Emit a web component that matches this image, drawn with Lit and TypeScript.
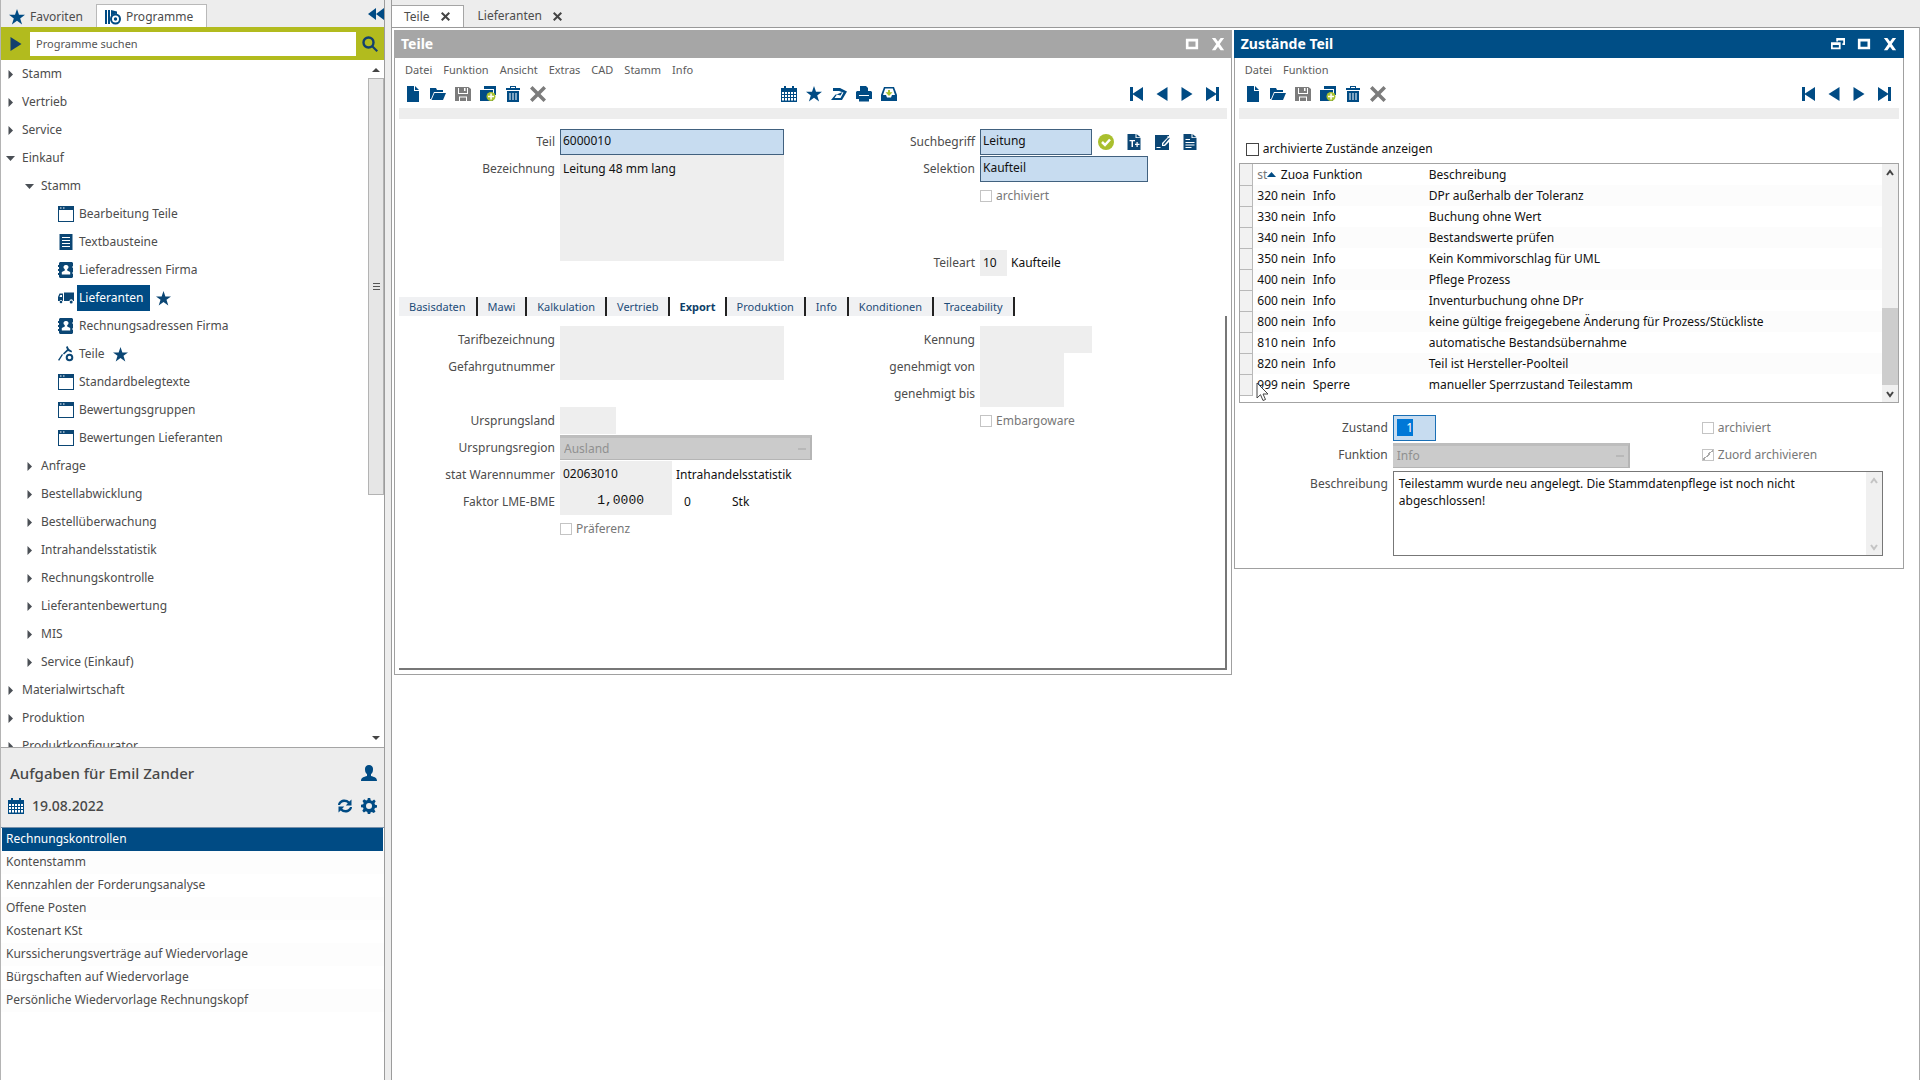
import { LitElement, html, css, svg, nothing } from "lit";
import { customElement, property, state } from "lit/decorators.js";
import { classMap } from "lit/directives/class-map.js";

const shapes: Record<string, unknown> = {
  star: svg`<path d="M8 0l2 5.800h6l-4.800 3.600 1.900 6L8 11.800 2.900 15.400l1.900-6L0 5.800h6z"/>`,
  programs: svg`<path d="M0 1h2v14H0zM3 1h2v14H3zM6 1l6 1.500V5A5.500 5.500 0 0 0 6 8z"/><circle cx="10.500" cy="10" r="4.500" fill="#fff" stroke="currentColor" stroke-width="2"/><circle cx="10.500" cy="10" r="1.700"/>`,
  window: svg`<path d="M0 0h16v16H0zM1 4v11h14V4z" fill-rule="evenodd"/><path fill="#fff" d="M2 1.500h1.500v1H2zM5 1.500h1.500v1H5z"/>`,
  lines: svg`<path d="M1.500 0h13v16h-13z"/><path fill="#fff" d="M4 3h8v1H4zM4 6h8v1H4zM4 9h8v1H4zM4 12h8v1H4z"/>`,
  book: svg`<path d="M2 0h12l1 1v3l-1 1 1 1v4l-1 1 1 1v3l-1 1H2l-1-1v-2H0v-2h1v-2H0V7h1V5H0V3h1V1z"/><path fill="#fff" d="M8 3a2.200 2.200 0 0 1 1.200 4.200V8.500l3 1.500v2.500H3.800V10l3-1.500V7.200A2.200 2.200 0 0 1 8 3z"/>`,
  truck: svg`<path d="M6 2.500H16V11h-1a1.800 1.800 0 0 0-3.600 0H6zM0 7l1.500-3.500H5V11h-.5a1.500 1.500 0 0 0-2.900 0H0z"/><path fill="#fff" d="M1.500 7l.8-2H4v2z"/><circle cx="13.200" cy="12" r="1.500"/><circle cx="3" cy="12" r="1.300"/>`,
  parts: svg`<path d="M0 14L4 8l1 .8-3.800 6zM8 1l1.500-1L11 3l3 2-.5 1.500L10 5 6 8.500 5 7.500l4-4z"/><circle cx="11.500" cy="11.500" r="2.800" fill="none" stroke="currentColor" stroke-width="2"/>`,
  file: svg`<path d="M2 0h7v5h5v11H2zM10 0l4 4h-4z"/>`,
  folder: svg`<path d="M0 2h6l1 2h6v2H4L1 13H0z"/><path d="M4.500 7H16l-3 7H1.500z"/>`,
  save: svg`<path d="M1 1h12.500L16 3v12H0V1z"/><path fill="#fff" d="M3 2h1v5h8V2h1v6H3zM4 10.500h8V15h-1v-3.500H5V15H4z"/><path fill="#fff" d="M9 2h1.500v3H9z"/>`,
  copy: svg`<path d="M4 0h12v9h-2V3H4z"/><path d="M0 4h13v11H0z"/><circle cx="11" cy="10.500" r="4.500" fill="#a9c22f"/><path fill="#fff" d="M10.300 7.500h1.500v2.200H14v1.500h-2.200v2.300h-1.500v-2.300H8V9.700h2.300z"/>`,
  trash: svg`<path d="M5 0h6v2h4v2H1V2h4zM6 1v1h4V1z" fill-rule="evenodd"/><path d="M2 5h12v11H2z"/><path fill="#fff" d="M4.500 7h1v7h-1zM7.500 7h1v7h-1zM10.500 7h1v7h-1z"/>`,
  cross: svg`<path d="M2.500 0L8 5.500 13.500 0 16 2.500 10.500 8 16 13.500 13.500 16 8 10.500 2.500 16 0 13.500 5.500 8 0 2.500z"/>`,
  calendar: svg`<path d="M0 2h3V0h2v2h6V0h2v2h3v14H0z"/><path fill="#fff" d="M1 6h2v2H1zM4 6h2v2H4zM7 6h2v2H7zM10 6h2v2h-2zM13 6h2v2h-2zM1 9h2v2H1zM4 9h2v2H4zM7 9h2v2H7zM10 9h2v2h-2zM13 9h2v2h-2zM1 12h2v2.500H1zM4 12h2v2.500H4zM7 12h2v2.500H7zM10 12h2v2.500h-2zM13 12h2v2.500h-2z"/>`,
  send: svg`<path d="M2 2h7l7 3.500L11 14H0l4.500-5.500H6L3.500 12H9.500l3-5.500L8 5H2z"/><path d="M5.500 8.500l6-2.500-2 3.500z"/>`,
  print: svg`<path d="M4 0h6l2 2v3H4zM1 5h14l1 1v7h-3v2.500H3V13H0V6z"/><path fill="#fff" d="M3 9h10v1H3z"/>`,
  inbox: svg`<path d="M3 1h10l3 8v6H0V9z"/><path fill="#fff" d="M4.200 2.500h7.600L14 9h-3l-1 2.500H6L5 9H2z"/><path fill="#a9c22f" d="M7 4h2v2.200h2.500L8 10 4.500 6.200H7z"/>`,
  first: svg`<path d="M1 1h3v6.500L14 1v14L4 8.500V15H1z"/>`,
  prev: svg`<path d="M2.500 8L13.500 1v14z"/>`,
  next: svg`<path d="M13.500 8L2.500 1v14z"/>`,
  last: svg`<path d="M15 1h-3v6.500L2 1v14l10-6.500V15h3z"/>`,
  check: svg`<circle cx="8" cy="8" r="8" fill="#a9bf2e"/><path fill="none" stroke="#fff" stroke-width="2.500" d="M4 8l3 3 5-5.500"/>`,
  textfile: svg`<path d="M1.500 0h8v4h5v12h-13zM10.500 0l4 3.200h-4z"/><path fill="#fff" d="M3.500 6H9v1.300H7V13H5.500V7.300h-2zM10.500 8h1.200v1.700h1.800v1.200h-1.800v2h-1.200v-2H9V9.700h1.500z"/>`,
  edit: svg`<path d="M1 1h14v1L8 9v3h3l4-4v8H1z"/><path d="M9.500 9.500L15 3l1 1-5.500 6.500-1.500.5z"/><path fill="#fff" d="M2.500 13h4v1h-4z"/><path d="M14 2l2 1.500-1 1-2-1.500z" fill="#fff"/>`,
  note: svg`<path d="M1.500 0h8v4h5v12h-13zM10.500 0l4 3.200h-4z"/><path fill="#fff" d="M3.500 5H8v1H3.500zM3.500 8h9v1h-9zM3.500 10.500h9v1h-9zM3.500 13h6v1h-6z"/>`,
  maximize: svg`<path fill-rule="evenodd" d="M1 2h14v12H1zM4 5v6h8V5z"/>`,
  restore: svg`<path fill-rule="evenodd" d="M6 1h10v8h-3V7h1V4H8v1H6zM0 6h11v8H0zM2 9v3h7V9z"/>`,
  close: svg`<path d="M1 1h4l3 4 3-4h4l-5 7 5 7h-4l-3-4-3 4H1l5-7z"/>`,
  collapse: svg`<path d="M0 8l8-6v12zM8 8l8-6v12z"/>`,
  search: svg`<circle cx="6.500" cy="6.500" r="5" fill="none" stroke="currentColor" stroke-width="2.400"/><path d="M9.500 11L11 9.500l5 5L14.500 16z"/>`,
  user: svg`<path d="M8 0a4 4 0 0 1 4 4.500C12 7 11 8.500 10 9v2c3 .8 6 1.500 6 5H0c0-3.500 3-4.200 6-5V9C5 8.500 4 7 4 4.500A4 4 0 0 1 8 0z"/>`,
  refresh: svg`<path d="M1 7c0-3.500 3.500-5.500 6.500-5.500 2 0 3.700.8 4.800 2L14.500 1.500v6H8.800l2-2.200C9.800 4.500 8.700 4 7.500 4 5 4 3.500 5.500 3 7zM15 9c0 3.500-3.500 5.500-6.500 5.500-2 0-3.700-.8-4.800-2L1.500 14.500v-6h5.700l-2 2.200c1 .8 2.100 1.300 3.300 1.300 2.500 0 4-1.500 4.500-3z"/>`,
  gear: svg`<path fill-rule="evenodd" d="M6.800 0h2.400l.5 2.300 1.400.6 2-1.300 1.600 1.700-1.200 2 .5 1.400 2 .5v2.400l-2.100.5-.6 1.400 1.200 2-1.700 1.600-2-1.200-1.300.6L9.200 16H6.800l-.5-2.100-1.400-.6-2 1.200-1.600-1.700 1.200-2-.5-1.200L0 9.200V6.800l2.200-.5.5-1.400-1.200-2 1.700-1.600 2 1.300 1.200-.5zM8 5a3 3 0 1 0 0 6 3 3 0 0 0 0-6z"/>`,
};

@customElement("ui-icon")
class UiIcon extends LitElement {
  static styles = css`
    :host { display: inline-flex; width: 16px; height: 16px; flex: none; }
    .glyph { width: 100%; height: 100%; fill: currentColor; }
  `;
  @property() name = "file";
  render() {
    return html`<svg class="glyph" viewBox="0 0 16 16" aria-hidden="true">${shapes[this.name]}</svg>`;
  }
}

const base = css`
  * { box-sizing: border-box; }
  button, input, select, textarea { font: inherit; color: inherit; margin: 0; border-radius: 0; }
  button { border: 0; background: none; padding: 0; display: inline-flex; align-items: center; justify-content: center; }
  ul { list-style: none; margin: 0; padding: 0; }
`;

const windowStyles = css`
  :host { display: block; background: #fff; border: 1px solid #a0a0a0; border-top: 0; padding: 0 4px 4px; color: #4c4c4c; min-width: 0; }
  .title { display: flex; align-items: center; gap: 12px; height: 28px; margin: 0 -5px; padding: 0 7px; color: #fff; }
  .title.idle { background: #a6a6a6; }
  .title.active { background: #004e86; }
  .title h2 { margin: 0; flex: 1; font-size: 14px; line-height: 20px; font-weight: 700; }
  .title ui-icon { width: 14px; height: 14px; }
  .menu { display: flex; gap: 11px; height: 24px; align-items: center; padding: 0 6px; font-size: 11px; color: #5c5c5c; }
  .tools { display: grid; grid-template-columns: 7fr auto 6fr; align-items: center; height: 24px; padding: 0 7px 0 6px; color: #004b84; }
  .set { display: flex; gap: 9px; }
  .set.end { justify-content: flex-end; }
  .off { color: #7c7c7c; }
  .strip { height: 11px; margin-top: 2px; background: #ededed; }
  label { text-align: right; padding-right: 5px; line-height: 16px; white-space: nowrap; }
  .field { height: 26px; border: 0; background: #eee; padding: 0 3px 2px; color: #111; min-width: 0; }
  .field.key { background: #c7dcf0; border: 1px solid #41617f; padding: 0 2px 2px; }
  .tick { display: inline-flex; align-items: center; gap: 4px; text-align: left; padding: 0; color: #777; }
  .tick input { appearance: none; width: 12px; height: 12px; border: 1px solid #c4c4c4; background: #fff; }
  .combo { appearance: none; width: 100%; height: 25px; border: 0; border-top: 3px solid #bdbdbd; border-right: 2px solid #b5b5b5; border-bottom: 1px solid #b5b5b5; background: linear-gradient(#b8b8b8, #b8b8b8) right 4px center / 8px 2px no-repeat #cbcbcb; color: #909090; opacity: 1; padding: 0 4px; }
`;

function tool(name: string, label: string, off = false) {
  return html`<button type="button" aria-label=${label} class=${off ? "off" : ""}><ui-icon name=${name}></ui-icon></button>`;
}
const fileTools = html`<div class="set">
  ${tool("file", "Neu")}${tool("folder", "Öffnen")}${tool("save", "Speichern", true)}${tool("copy", "Kopieren")}${tool("trash", "Löschen")}${tool("cross", "Abbrechen", true)}
</div>`;
const navTools = html`<div class="set end">
  ${tool("first", "Erster")}${tool("prev", "Zurück")}${tool("next", "Weiter")}${tool("last", "Letzter")}
</div>`;

interface Node { text: string; level: number; open?: boolean; icon?: string; fav?: boolean; selected?: boolean; }
const tree: Node[] = [
  { text: "Stamm", level: 1 },
  { text: "Vertrieb", level: 1 },
  { text: "Service", level: 1 },
  { text: "Einkauf", level: 1, open: true },
  { text: "Stamm", level: 2, open: true },
  { text: "Bearbeitung Teile", level: 3, icon: "window" },
  { text: "Textbausteine", level: 3, icon: "lines" },
  { text: "Lieferadressen Firma", level: 3, icon: "book" },
  { text: "Lieferanten", level: 3, icon: "truck", fav: true, selected: true },
  { text: "Rechnungsadressen Firma", level: 3, icon: "book" },
  { text: "Teile", level: 3, icon: "parts", fav: true },
  { text: "Standardbelegtexte", level: 3, icon: "window" },
  { text: "Bewertungsgruppen", level: 3, icon: "window" },
  { text: "Bewertungen Lieferanten", level: 3, icon: "window" },
  { text: "Anfrage", level: 2 },
  { text: "Bestellabwicklung", level: 2 },
  { text: "Bestellüberwachung", level: 2 },
  { text: "Intrahandelsstatistik", level: 2 },
  { text: "Rechnungskontrolle", level: 2 },
  { text: "Lieferantenbewertung", level: 2 },
  { text: "MIS", level: 2 },
  { text: "Service (Einkauf)", level: 2 },
  { text: "Materialwirtschaft", level: 1 },
  { text: "Produktion", level: 1 },
  { text: "Produktkonfigurator", level: 1 },
];
const tasks = [
  "Rechnungskontrollen", "Kontenstamm", "Kennzahlen der Forderungsanalyse", "Offene Posten", "Kostenart KSt",
  "Kurssicherungsverträge auf Wiedervorlage", "Bürgschaften auf Wiedervorlage", "Persönliche Wiedervorlage Rechnungskopf",
];

@customElement("side-panel")
class SidePanel extends LitElement {
  static styles = [base, css`
    :host { display: flex; flex-direction: column; height: 100vh; border-right: 1px solid #9c9c9c; border-left: 1px solid #b4b4b4; background: #ededed; color: #4c4c4c; }
    .tabs { display: flex; align-items: flex-end; height: 27px; flex: none; }
    .tab { height: 23px; gap: 5px; padding: 2px 13px 0 8px; }
    .tab ui-icon, .collapse { color: #004b84; }
    .tab.on { background: #fff; border: 1px solid #b9b9b9; border-bottom: 0; }
    .collapse { margin-left: auto; align-self: center; }
    .search { display: flex; height: 33px; flex: none; background: #b2bb1e; padding: 5px 0 4px; color: #12406e; }
    .search .run { width: 29px; }
    .search .go { width: 28px; }
    .search input { flex: 1; min-width: 0; border: 0; background: #fff; color: #555; font-size: 11px; padding: 0 6px; }
    .search input::placeholder { color: #555; opacity: 1; }
    .browse { flex: 31 1 0; min-height: 0; display: flex; background: #fff; border-bottom: 1px solid #a5a5a5; }
    .tree { flex: 1; overflow: hidden; }
    .node { display: flex; align-items: center; height: 28px; gap: 4px; }
    .l1 { padding-left: 3px; }
    .l2 { padding-left: 22px; }
    .l3 { padding-left: 57px; gap: 3px; }
    .twist { width: 12px; display: flex; justify-content: center; }
    .twist svg { width: 9px; height: 9px; fill: #4a4f55; }
    .node ui-icon { color: #0b4674; }
    .name { padding: 0 2px; line-height: 26px; }
    .name.sel { background: #004b84; color: #fff; padding-right: 7px; }
    .node .fav { width: 15px; height: 15px; margin-left: 3px; }
    .bar { width: 16px; display: flex; flex-direction: column; align-items: center; background: #fff; }
    .bar svg { width: 8px; height: 18px; fill: #444; }
    .thumb { flex: 16 1 0; width: 100%; background: #e6e6e6; border: 1px solid #b3b3b3; display: flex; align-items: center; justify-content: center; }
    .grip { width: 7px; height: 7px; border-top: 1px solid #555; border-bottom: 1px solid #555; display: flex; align-items: center; }
    .grip::before { content: ""; flex: 1; border-top: 1px solid #555; }
    .space { flex: 9 1 0; }
    .todo { flex: 15 1 0; min-height: 0; display: flex; flex-direction: column; }
    .handle { width: 21px; height: 5px; margin: 2px auto; background: radial-gradient(#777 40%, transparent 45%) 0 0 / 2px 2px; flex: none; }
    .line { display: flex; align-items: center; height: 33px; padding: 0 7px 0 9px; gap: 8px; font-size: 15px; font-weight: 500; color: #484848; flex: none; }
    .date { padding-left: 7px; font-size: 14px; }
    .line .grow { flex: 1; }
    .line button, .line > ui-icon { color: #004b84; }
    .tasks { flex: 1; background: #fff; border-top: 1px solid #7690aa; margin-top: 4px; overflow: hidden; }
    .task { display: flex; align-items: center; height: 23px; padding-left: 5px; }
    .task:nth-child(even) { background: #fdfdfd; }
    .task.sel { background: #004b84; color: #fff; margin: 0 1px; padding-left: 4px; }
  `];

  private twist(n: Node) {
    return html`<span class="twist"><svg viewBox="0 0 9 9">${n.open ? svg`<path d="M0 2h9L4.500 7z"/>` : svg`<path d="M2.500 0v9L7 4.500z"/>`}</svg></span>`;
  }

  render() {
    return html`
      <div class="tabs">
        <button class="tab" type="button"><ui-icon name="star"></ui-icon>Favoriten</button>
        <button class="tab on" type="button"><ui-icon name="programs"></ui-icon>Programme</button>
        <button class="collapse" type="button" aria-label="Einklappen"><ui-icon name="collapse"></ui-icon></button>
      </div>
      <div class="search">
        <button class="run" type="button" aria-label="Starten"><ui-icon name="next"></ui-icon></button>
        <input type="text" aria-label="Programme suchen" placeholder="Programme suchen">
        <button class="go" type="button" aria-label="Suchen"><ui-icon name="search"></ui-icon></button>
      </div>
      <div class="browse">
        <ul class="tree">
          ${tree.map((n) => html`<li class="node l${n.level}">
            ${n.icon ? html`<ui-icon name=${n.icon}></ui-icon>` : this.twist(n)}
            <span class=${classMap({ name: true, sel: !!n.selected })}>${n.text}</span>
            ${n.fav ? html`<ui-icon class="fav" name="star"></ui-icon>` : nothing}
          </li>`)}
        </ul>
        <div class="bar">
          <svg viewBox="0 0 8 18"><path d="M0 12h8L4 8z"/></svg>
          <div class="thumb"><span class="grip"></span></div>
          <div class="space"></div>
          <svg viewBox="0 0 8 18"><path d="M0 7h8l-4 4z"/></svg>
        </div>
      </div>
      <section class="todo">
        <div class="handle"></div>
        <div class="line"><span class="grow">Aufgaben für Emil Zander</span><ui-icon name="user"></ui-icon></div>
        <div class="line date">
          <ui-icon name="calendar"></ui-icon><span class="grow">19.08.2022</span>
          <button type="button" aria-label="Aktualisieren"><ui-icon name="refresh"></ui-icon></button>
          <button type="button" aria-label="Einstellungen"><ui-icon name="gear"></ui-icon></button>
        </div>
        <ul class="tasks">
          ${tasks.map((t, i) => html`<li class=${classMap({ task: true, sel: i === 0 })}>${t}</li>`)}
        </ul>
      </section>`;
  }
}

@customElement("part-window")
class PartWindow extends LitElement {
  @state() private tab = "Export";

  static styles = [base, windowStyles, css`
    .form { display: grid; grid-template-columns: 161px 259px 161px 1fr; grid-auto-rows: 27px; align-items: center; }
    .head { padding-top: 9px; height: 177px; }
    .tall { grid-row: span 4; align-self: start; height: 106px; resize: none; outline: none; line-height: 18px; padding: 5px 3px; overflow: hidden; }
    .c2 { grid-column: 2; }
    .c3 { grid-column: 3; }
    .c4 { grid-column: 4; }
    .w1 { width: 224px; }
    .w2 { width: 168px; }
    .w3 { width: 112px; }
    .w4 { width: 84px; }
    .w5 { width: 56px; }
    .w6 { width: 27px; }
    .wide { width: 252px; }
    .flow { display: flex; align-items: center; }
    .icons { display: flex; gap: 12px; margin-left: 6px; color: #0b4674; }
    .black { color: #111; padding-left: 4px; }
    .pages { display: flex; height: 20px; align-items: flex-end; }
    .page { height: 19px; font-size: 11px; color: #1d4c78; background: #f0f1f3; border-right: 2px solid #222; padding: 0 10px; }
    .page.on { background: #fff; font-weight: 700; color: #0f3f69; padding: 0 9px; }
    .panel { border-right: 2px solid #777; border-bottom: 2px solid #777; padding-top: 10px; min-height: 354px; }
    .panel .field { height: 27px; }
    .num { font-family: "Liberation Mono", monospace; font-size: 13px; text-align: right; padding-right: 28px; }
    .unit { width: 48px; padding-left: 12px; color: #111; }
    .r4 { grid-row: 4; }
    .r5 { grid-row: 5; }
    .r6 { grid-row: 6; }
    .r7 { grid-row: 7; }
    .r8 { grid-row: 8; }
    .kind { grid-row: 5 / 7; }
  `];

  private pages = ["Basisdaten", "Mawi", "Kalkulation", "Vertrieb", "Export", "Produktion", "Info", "Konditionen", "Traceability"];

  render() {
    return html`
      <header class="title idle"><h2>Teile</h2>
        <button type="button" aria-label="Maximieren"><ui-icon name="maximize"></ui-icon></button>
        <button type="button" aria-label="Schließen"><ui-icon name="close"></ui-icon></button>
      </header>
      <nav class="menu">${["Datei", "Funktion", "Ansicht", "Extras", "CAD", "Stamm", "Info"].map((m) => html`<button type="button">${m}</button>`)}</nav>
      <div class="tools">${fileTools}
        <div class="set">${tool("calendar", "Kalender")}${tool("star", "Favorit")}${tool("send", "Senden")}${tool("print", "Drucken")}${tool("inbox", "Ablage")}</div>
        ${navTools}</div>
      <div class="strip"></div>
      <div class="form head">
        <label for="teil">Teil</label><input id="teil" class="field key w1" value="6000010">
        <label for="such">Suchbegriff</label>
        <div class="flow"><input id="such" class="field key w3" value="Leitung">
          <span class="icons">${tool("check", "Prüfen")}${tool("textfile", "Text")}${tool("edit", "Bearbeiten")}${tool("note", "Notiz")}</span></div>
        <label for="bez">Bezeichnung</label><textarea id="bez" class="field tall w1" readonly>Leitung 48 mm lang</textarea>
        <label class="c3" for="sel">Selektion</label><input id="sel" class="field key w2" value="Kaufteil">
        <label class="tick c4"><input type="checkbox" disabled>archiviert</label>
        <label class="c3 kind" for="art">Teileart</label>
        <div class="flow c4 kind"><input id="art" class="field w6" value="10" readonly><span class="black">Kaufteile</span></div>
      </div>
      <div class="pages" role="tablist">
        ${this.pages.map((p) => html`<button type="button" role="tab" class=${classMap({ page: true, on: p === this.tab })} @click=${() => (this.tab = p)}>${p}</button>`)}
      </div>
      <div class="panel form">
        <label for="tarif">Tarifbezeichnung</label><input id="tarif" class="field w1" readonly>
        <label for="kenn">Kennung</label><input id="kenn" class="field w3" readonly>
        <label for="gefahr">Gefahrgutnummer</label><input id="gefahr" class="field w1" readonly>
        <label for="von">genehmigt von</label><input id="von" class="field w4" readonly>
        <label class="c3" for="bis">genehmigt bis</label><input id="bis" class="field w4" readonly>
        <label class="r4" for="land">Ursprungsland</label><input id="land" class="field w5 r4" readonly>
        <label class="tick c4 r4"><input type="checkbox" disabled>Embargoware</label>
        <label class="r5" for="region">Ursprungsregion</label>
        <div class="wide r5"><select id="region" class="combo" disabled><option>Ausland</option></select></div>
        <label class="r6" for="ware">stat Warennummer</label>
        <div class="flow r6"><input id="ware" class="field w3" value="02063010" readonly><span class="black">Intrahandelsstatistik</span></div>
        <label class="r7" for="faktor">Faktor LME-BME</label>
        <div class="flow r7"><input id="faktor" class="field w3 num" value="1,0000" readonly><span class="unit">0</span><span class="unit">Stk</span></div>
        <label class="tick c2 r8"><input type="checkbox" disabled>Präferenz</label>
      </div>`;
  }
}

const states = [
  ["320", "nein", "Info", "DPr außerhalb der Toleranz"],
  ["330", "nein", "Info", "Buchung ohne Wert"],
  ["340", "nein", "Info", "Bestandswerte prüfen"],
  ["350", "nein", "Info", "Kein Kommivorschlag für UML"],
  ["400", "nein", "Info", "Pflege Prozess"],
  ["600", "nein", "Info", "Inventurbuchung ohne DPr"],
  ["800", "nein", "Info", "keine gültige freigegebene Änderung für Prozess/Stückliste"],
  ["810", "nein", "Info", "automatische Bestandsübernahme"],
  ["820", "nein", "Info", "Teil ist Hersteller-Poolteil"],
  ["999", "nein", "Sperre", "manueller Sperrzustand Teilestamm"],
];

@customElement("state-window")
class StateWindow extends LitElement {
  static styles = [base, windowStyles, css`
    .tools { grid-template-columns: 1fr 1fr; }
    .option { padding: 22px 7px 6px; display: flex; }
    .option .tick { color: #111; }
    .option .tick input { width: 13px; height: 13px; border-color: #444; }
    .grid { position: relative; display: flex; border: 1px solid #a3a3a3; padding-bottom: 6px; }
    table { flex: 1; border-collapse: collapse; table-layout: fixed; color: #111; }
    th, td { height: 21px; padding: 0 0 0 1px; text-align: left; font-weight: 400; line-height: 20px; white-space: nowrap; }
    tbody tr:nth-child(odd) { background: #fcfcfc; }
    .knob { width: 13px; background: #f2f2f2; border-right: 1px solid #b9b9b9; border-bottom: 1px solid #b9b9b9; }
    .no { width: 27px; padding-left: 4px; }
    .zu { width: 32px; }
    .fn { width: 116px; }
    .sort { display: inline-flex; align-items: center; color: #777; }
    .sort svg { width: 9px; height: 5px; fill: #004b84; }
    .bar { width: 16px; margin-bottom: -6px; background: #f0f0f0; display: flex; flex-direction: column; align-items: center; }
    .bar svg { width: 8px; height: 17px; fill: none; stroke: #444; stroke-width: 2; }
    .space { flex: 5 1 0; }
    .thumb { flex: 3 1 0; width: 100%; background: #cdcdcd; }
    .detail { display: grid; grid-template-columns: 154px 309px 1fr; grid-auto-rows: minmax(27px, auto); align-items: center; padding: 12px 16px 8px 0; }
    .nr { width: 43px; background: #c7dcf0; border: 1px solid #1a6fb5; padding: 0 3px 2px; outline: none; }
    .nr::selection { background: #0078d7; color: #fff; }
    .combo.narrow { width: 237px; }
    .top { align-self: start; padding-top: 7px; }
    .memo { grid-column: 2 / 4; display: flex; border: 1px solid #777; height: 85px; margin-top: 2px; }
    .memo textarea { flex: 1; border: 0; outline: none; resize: none; color: #111; line-height: 17px; padding: 3px 5px; overflow: hidden; }
    .memo .bar { margin: 0; justify-content: space-between; }
    .memo .bar svg { stroke: #c4c4c4; }
    .tick .done { background: linear-gradient(135deg, transparent 45%, #aaa 45% 55%, transparent 55%), #fff; }
    .pointer { position: absolute; left: 16px; top: 218px; width: 14px; height: 20px; }
  `];

  firstUpdated() {
    const input = this.renderRoot.querySelector<HTMLInputElement>("#zustand")!;
    input.focus({ preventScroll: true });
    input.select();
  }

  render() {
    const up = svg`<path d="M1 11l3-4 3 4"/>`;
    const down = svg`<path d="M1 7l3 4 3-4"/>`;
    return html`
      <header class="title active"><h2>Zustände Teil</h2>
        <button type="button" aria-label="Wiederherstellen"><ui-icon name="restore"></ui-icon></button>
        <button type="button" aria-label="Maximieren"><ui-icon name="maximize"></ui-icon></button>
        <button type="button" aria-label="Schließen"><ui-icon name="close"></ui-icon></button>
      </header>
      <nav class="menu"><button type="button">Datei</button><button type="button">Funktion</button></nav>
      <div class="tools">${fileTools}${navTools}</div>
      <div class="strip"></div>
      <div class="option"><label class="tick"><input type="checkbox">archivierte Zustände anzeigen</label></div>
      <div class="grid">
        <table>
          <thead><tr><th class="knob"></th><th class="no"><span class="sort">st<svg viewBox="0 0 9 5"><path d="M0 5l4.500-5L9 5z"/></svg></span></th><th class="zu">Zuoa</th><th class="fn">Funktion</th><th>Beschreibung</th></tr></thead>
          <tbody>${states.map((r) => html`<tr><td class="knob"></td><td class="no">${r[0]}</td><td class="zu">${r[1]}</td><td class="fn">${r[2]}</td><td>${r[3]}</td></tr>`)}</tbody>
        </table>
        <div class="bar"><svg viewBox="0 0 8 17">${up}</svg><div class="space"></div><div class="thumb"></div><svg viewBox="0 0 8 17">${down}</svg></div>
        <svg class="pointer" viewBox="0 0 14 20"><path d="M1 1v15l3.500-3.300L7 18.500l2.500-1L7 12h5z" fill="#fff" stroke="#444"/></svg>
      </div>
      <div class="detail">
        <label for="zustand">Zustand</label><div><input id="zustand" class="field nr" .value=${"   1"}></div>
        <label class="tick"><input type="checkbox" disabled>archiviert</label>
        <label for="funktion">Funktion</label><div><select id="funktion" class="combo narrow" disabled><option>Info</option></select></div>
        <label class="tick"><input class="done" type="checkbox" checked disabled>Zuord archivieren</label>
        <label class="top" for="beschreibung">Beschreibung</label>
        <div class="memo"><textarea id="beschreibung" .value=${"Teilestamm wurde neu angelegt. Die Stammdatenpflege ist noch nicht abgeschlossen!"}></textarea>
          <div class="bar"><svg viewBox="0 0 8 17">${up}</svg><svg viewBox="0 0 8 17">${down}</svg></div></div>
      </div>`;
  }
}

@customElement("app-root")
class AppRoot extends LitElement {
  static styles = [base, css`
    :host { display: grid; grid-template-columns: 385px 1fr; column-gap: 6px; min-height: 100vh; background: #ededed; font: 12px/16px "Noto Sans", sans-serif; }
    .work { display: flex; flex-direction: column; min-width: 0; border-left: 1px solid #9c9c9c; }
    .tabs { display: flex; height: 27px; align-items: flex-end; color: #4c4c4c; }
    .doc { height: 22px; gap: 11px; padding: 0 14px; }
    .doc.on { background: #fff; border: 1px solid #a5a5a5; border-bottom: 0; border-left: 0; padding: 0 13px 0 12px; }
    .doc ui-icon { width: 9px; height: 9px; color: #444; }
    .desk { flex: 1; display: grid; grid-template-columns: 5fr 4fr; column-gap: 2px; align-items: start; background: #fff; border-top: 1px solid #999; border-right: 1px solid #aaa; padding: 2px 15px 0 2px; }
  `];

  render() {
    return html`
      <side-panel></side-panel>
      <main class="work">
        <div class="tabs">
          <button class="doc on" type="button">Teile<ui-icon name="cross"></ui-icon></button>
          <button class="doc" type="button">Lieferanten<ui-icon name="cross"></ui-icon></button>
        </div>
        <div class="desk"><part-window></part-window><state-window></state-window></div>
      </main>`;
  }
}
